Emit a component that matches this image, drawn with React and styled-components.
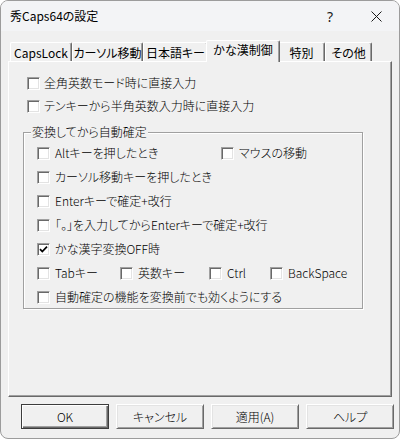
import React from "react";
import styled, { createGlobalStyle } from "styled-components";

const GlobalStyle = createGlobalStyle`
  html, body { margin: 0; padding: 0; background: #ffffff; }
  body {
    font-family: "Noto Sans CJK JP", "Noto Sans", sans-serif;
    font-size: 12px;
    font-weight: 300;
    color: #000;
  }
  * { box-sizing: border-box; }
`;

const Window = styled.div`
  width: 400px;
  height: 439px;
  border: 1px solid #9c9c9c;
  border-radius: 8px;
  overflow: hidden;
  background: #f0f0f0;
  display: flex;
  flex-direction: column;
`;

const TitleBar = styled.div`
  height: 30px;
  flex: none;
  display: flex;
  align-items: center;
  background: #f3f4f6;
`;

const Title = styled.div`
  flex: 1;
  padding-left: 9px;
  font-size: 12px;
  line-height: 16px;
  font-weight: 400;
  font-feature-settings: "palt";
`;

const CaptionButton = styled.div`
  width: 46px;
  height: 30px;
  display: flex;
  align-items: center;
  justify-content: center;
  font-family: "Noto Sans", sans-serif;
  font-size: 14px;
  font-weight: 400;
  color: #1a1a1a;
`;

const Body = styled.div`
  flex: 1;
  display: flex;
  flex-direction: column;
  padding: 9px 7px 0 7px;
`;

const TabStrip = styled.div`
  height: 21px;
  flex: none;
  display: flex;
  align-items: flex-end;
  padding-left: 2px;
  position: relative;
  z-index: 1;
`;

const Tab = styled.div`
  width: ${(p) => (p.$active ? p.$w + 4 : p.$w)}px;
  height: ${(p) => (p.$active ? 22 : 19)}px;
  margin: ${(p) => (p.$active ? "0 -2px -1px -2px" : "0")};
  padding-top: ${(p) => (p.$active ? 0 : 1)}px;
  position: relative;
  z-index: ${(p) => (p.$active ? 2 : 1)};
  background: #f0f0f0;
  border-top: 1px solid #ffffff;
  border-left: 1px solid #ffffff;
  border-right: 1px solid #696969;
  border-radius: 2px 2px 0 0;
  box-shadow: inset -1px 0 0 #a0a0a0;
  font-size: 12px;
  font-weight: 400;
  line-height: 17px;
  text-align: center;
  white-space: nowrap;
  font-feature-settings: "palt";
`;

const Panel = styled.div`
  flex: 1;
  display: flex;
  flex-direction: column;
  padding-top: 13px;
  border: 1px solid;
  border-color: #ffffff #696969 #696969 #ffffff;
  box-shadow: inset -1px -1px 0 #a0a0a0;
`;

const MainList = styled.div`
  display: flex;
  flex-direction: column;
  gap: 7px;
  padding-left: 18px;
`;

const Group = styled.div`
  position: relative;
  width: 340px;
  margin: 18px 0 0 14px;
  padding: 12px 0 3px 13px;
  border: 1px solid #a0a0a0;
  box-shadow: inset 1px 1px 0 #ffffff, 1px 1px 0 #ffffff;
  display: flex;
  flex-direction: column;
  gap: 8px;
`;

const GroupLabel = styled.div`
  position: absolute;
  top: -9px;
  left: 7px;
  padding: 0 1px;
  background: #f0f0f0;
  line-height: 16px;
  font-size: 12px;
  font-feature-settings: "palt";
`;

const Row = styled.div`
  display: flex;
  align-items: center;
  height: 16px;
`;

const Item = styled.label`
  display: flex;
  align-items: center;
  gap: ${(p) => (p.$gap ? p.$gap : 5)}px;
  width: ${(p) => (p.$w ? `${p.$w}px` : "auto")};
  flex: none;
  height: 16px;
  white-space: nowrap;
`;

const Box = styled.span`
  width: 13px;
  height: 13px;
  flex: none;
  display: flex;
  align-items: center;
  justify-content: center;
  background: #ffffff;
  border: 1px solid;
  border-color: #a0a0a0 #ffffff #ffffff #a0a0a0;
  box-shadow: inset 1px 1px 0 #696969, inset -1px -1px 0 #e3e3e3;
`;

const Label = styled.span`
  font-size: 12px;
  line-height: 16px;
  font-feature-settings: "palt";
`;

const ButtonBar = styled.div`
  height: 25px;
  flex: none;
  margin: 7px -2px 9px 0;
  display: flex;
  justify-content: flex-end;
  gap: 7px;
`;

const Button = styled.div`
  width: 88px;
  height: 25px;
  display: flex;
  align-items: center;
  justify-content: center;
  background: #f0f0f0;
  border: 1px solid;
  border-color: ${(p) => (p.$default ? "#3c3c3c" : "#ffffff #696969 #696969 #ffffff")};
  box-shadow: ${(p) =>
    p.$default
      ? "inset 1px 1px 0 #ffffff, inset -1px -1px 0 #696969, inset -2px -2px 0 #a0a0a0"
      : "inset 1px 1px 0 #e3e3e3, inset -1px -1px 0 #a0a0a0"};
  font-size: 12px;
  line-height: 16px;
  font-feature-settings: "palt";
`;

function Check({ checked }) {
  return (
    <Box>
      {checked && (
        <svg width="9" height="9" viewBox="0 0 9 9">
          <path d="M1 4.2 L3.3 6.6 L8 1.6" fill="none" stroke="#000" strokeWidth="1.7" />
        </svg>
      )}
    </Box>
  );
}

function CB({ text, checked, w, gap }) {
  return (
    <Item $w={w} $gap={gap}>
      <Check checked={checked} />
      <Label>{text}</Label>
    </Item>
  );
}

const tabs = [
  { t: "CapsLock", w: 62 },
  { t: "カーソル移動", w: 71 },
  { t: "日本語キー", w: 65 },
  { t: "かな漢制御", w: 70, active: true },
  { t: "特別", w: 47 },
  { t: "その他", w: 47 },
];

export default function App() {
  return (
    <>
      <GlobalStyle />
      <Window>
        <TitleBar>
          <Title>秀Caps64の設定</Title>
          <CaptionButton>?</CaptionButton>
          <CaptionButton>
            <svg width="11" height="11" viewBox="0 0 11 11">
              <path d="M0.5 0.5 L10.5 10.5 M10.5 0.5 L0.5 10.5" stroke="#1a1a1a" strokeWidth="1" />
            </svg>
          </CaptionButton>
        </TitleBar>
        <Body>
          <TabStrip>
            {tabs.map((t) => (
              <Tab key={t.t} $w={t.w} $active={t.active}>
                {t.t}
              </Tab>
            ))}
          </TabStrip>
          <Panel>
            <MainList>
              <Row>
                <CB gap={4} text="全角英数モード時に直接入力" />
              </Row>
              <Row>
                <CB gap={4} text="テンキーから半角英数入力時に直接入力" />
              </Row>
            </MainList>
            <Group>
              <GroupLabel>変換してから自動確定</GroupLabel>
              <Row>
                <CB w={184} text="Altキーを押したとき" />
                <CB text="マウスの移動" />
              </Row>
              <Row>
                <CB text="カーソル移動キーを押したとき" />
              </Row>
              <Row>
                <CB text="Enterキーで確定+改行" />
              </Row>
              <Row>
                <CB text="「。」を入力してからEnterキーで確定+改行" />
              </Row>
              <Row>
                <CB checked text="かな漢字変換OFF時" />
              </Row>
              <Row>
                <CB w={83} text="Tabキー" />
                <CB w={89} text="英数キー" />
                <CB w={61} text="Ctrl" />
                <CB text="BackSpace" />
              </Row>
              <Row>
                <CB text="自動確定の機能を変換前でも効くようにする" />
              </Row>
            </Group>
          </Panel>
          <ButtonBar>
            <Button $default>OK</Button>
            <Button>キャンセル</Button>
            <Button>適用(A)</Button>
            <Button>ヘルプ</Button>
          </ButtonBar>
        </Body>
      </Window>
    </>
  );
}
